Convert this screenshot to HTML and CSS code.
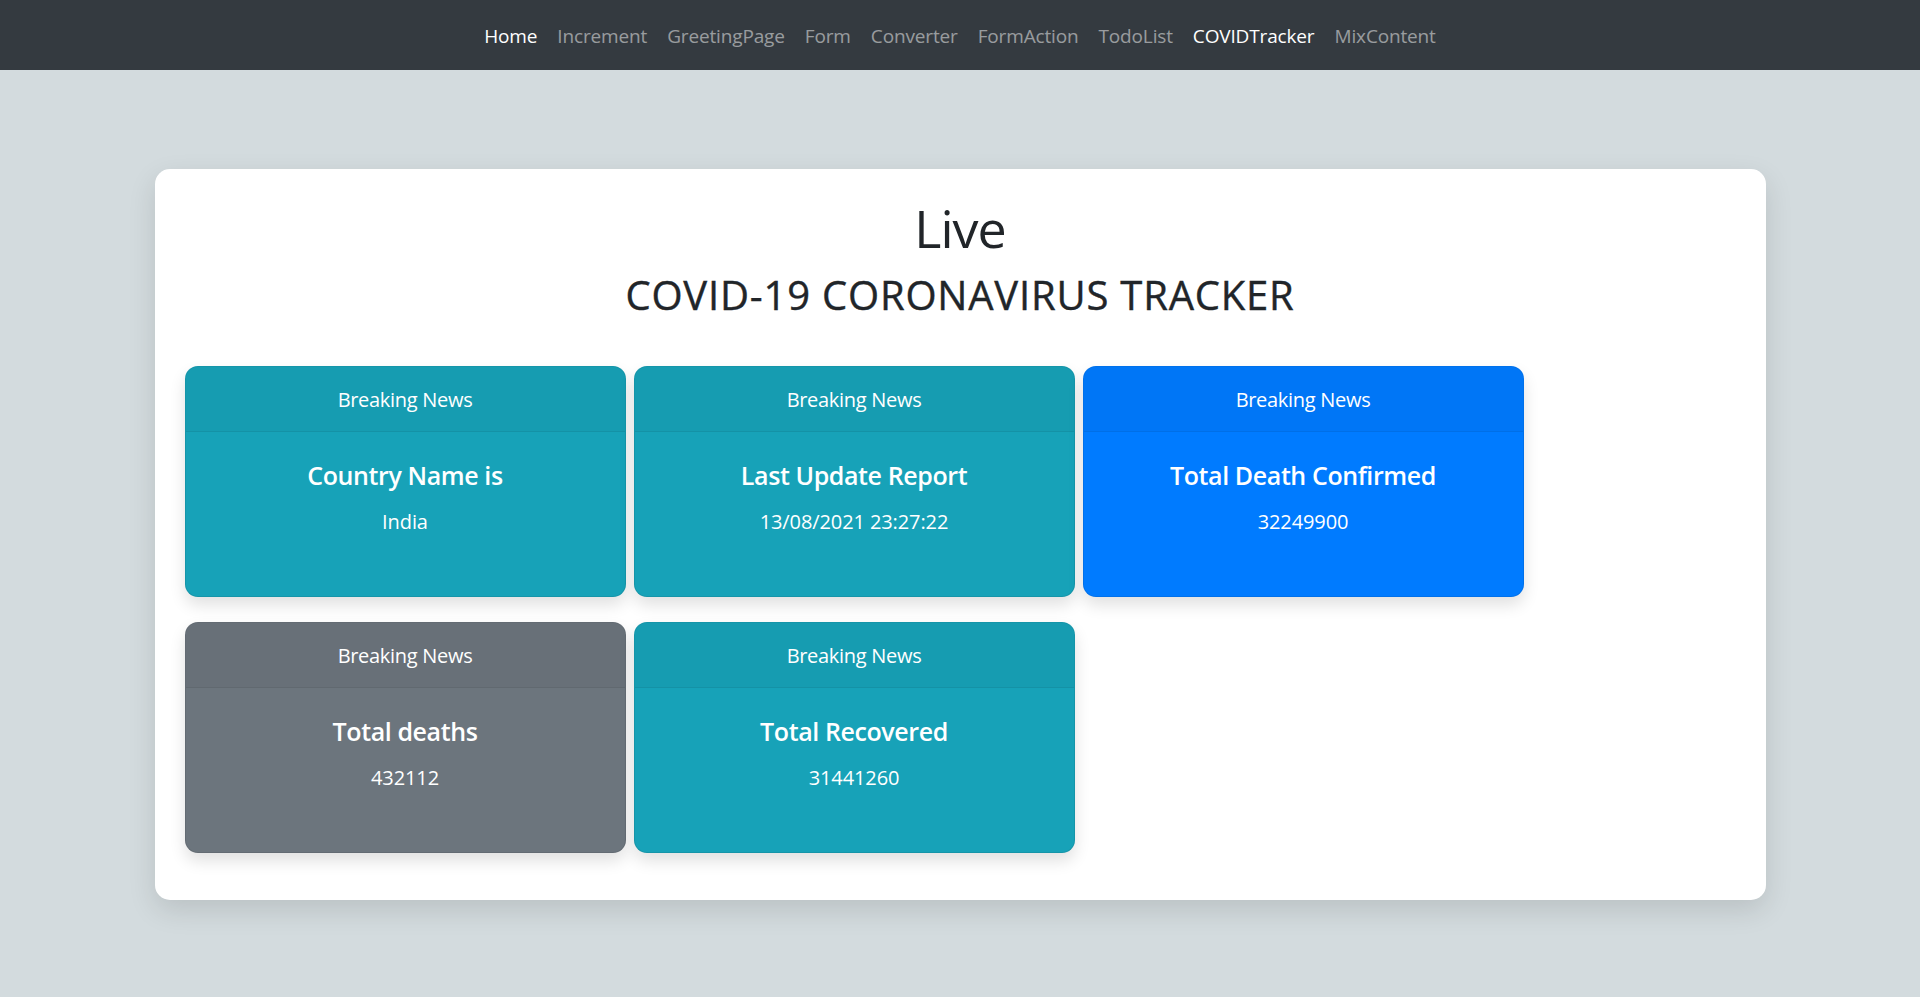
FILE: index.html
```html
<!DOCTYPE html>
<html lang="en">
<head>
<meta charset="utf-8">
<title>COVID Tracker</title>
<link rel="stylesheet" href="styles.css">
</head>
<body>
<nav class="navbar">
  <ul class="nav-list">
    <li><a class="nav-link active" href="#">Home</a></li>
    <li><a class="nav-link" href="#">Increment</a></li>
    <li><a class="nav-link" href="#">GreetingPage</a></li>
    <li><a class="nav-link" href="#">Form</a></li>
    <li><a class="nav-link" href="#">Converter</a></li>
    <li><a class="nav-link" href="#">FormAction</a></li>
    <li><a class="nav-link" href="#">TodoList</a></li>
    <li><a class="nav-link active" href="#">COVIDTracker</a></li>
    <li><a class="nav-link" href="#">MixContent</a></li>
  </ul>
</nav>
<main class="page">
  <section class="panel">
    <h1 class="title">Live</h1>
    <h2 class="subtitle">COVID-19 CORONAVIRUS TRACKER</h2>
    <div class="cards">
      <div class="card card-info">
        <div class="card-header">Breaking News</div>
        <div class="card-body">
          <h5 class="card-title">Country Name is</h5>
          <p class="card-text">India</p>
        </div>
      </div>
      <div class="card card-info">
        <div class="card-header">Breaking News</div>
        <div class="card-body">
          <h5 class="card-title">Last Update Report</h5>
          <p class="card-text">13/08/2021 23:27:22</p>
        </div>
      </div>
      <div class="card card-primary">
        <div class="card-header">Breaking News</div>
        <div class="card-body">
          <h5 class="card-title">Total Death Confirmed</h5>
          <p class="card-text">32249900</p>
        </div>
      </div>
      <div class="card card-secondary">
        <div class="card-header">Breaking News</div>
        <div class="card-body">
          <h5 class="card-title">Total deaths</h5>
          <p class="card-text">432112</p>
        </div>
      </div>
      <div class="card card-info">
        <div class="card-header">Breaking News</div>
        <div class="card-body">
          <h5 class="card-title">Total Recovered</h5>
          <p class="card-text">31441260</p>
        </div>
      </div>
    </div>
  </section>
</main>
</body>
</html>
```
FILE: styles.css
```css
* { box-sizing: border-box; }

html, body {
  margin: 0;
  padding: 0;
}

body {
  background: #d3dbde;
  font-family: "Open Sans", "Noto Sans", sans-serif;
  color: #212529;
  min-height: 997px;
}

.navbar {
  height: 70px;
  background: #343a40;
  display: flex;
  justify-content: center;
  align-items: center;
}

.nav-list {
  list-style: none;
  margin: 0;
  padding: 1px 0 0 0;
  display: flex;
}

.nav-link {
  display: block;
  padding: 0 10px;
  font-size: 19px;
  line-height: 30px;
  color: rgba(255, 255, 255, 0.5);
  text-decoration: none;
  letter-spacing: -0.15px;
}

.nav-link.active {
  color: #fff;
}

.page {
  padding-top: 99px;
}

.panel {
  width: 1611px;
  margin: 0 auto;
  background: #fff;
  border-radius: 15px;
  box-shadow: 0 10px 28px rgba(0, 0, 0, 0.12);
  padding: 28px 30px 47px;
}

.title {
  margin: 0;
  text-align: center;
  font-size: 52px;
  line-height: 62px;
  font-weight: 500;
  letter-spacing: -1px;
}

.subtitle {
  margin: 12px 0 0;
  text-align: center;
  font-size: 40px;
  line-height: 48px;
  font-weight: 500;
  letter-spacing: 0.8px;
  -webkit-text-stroke: 0.4px #212529;
}

.cards {
  margin-top: 47px;
  display: grid;
  grid-template-columns: repeat(3, 441px);
  column-gap: 8px;
  row-gap: 25px;
}

.card {
  border-radius: 13px;
  overflow: hidden;
  color: #fff;
  height: 231px;
  box-shadow: 0 8px 16px rgba(0, 0, 0, 0.12);
  border: 1px solid rgba(0, 0, 0, 0.08);
}

.card-header {
  height: 65px;
  display: flex;
  align-items: center;
  justify-content: center;
  font-size: 20px;
  letter-spacing: -0.3px;
  border-bottom: 1px solid rgba(0, 0, 0, 0.06);
  background: rgba(0, 0, 0, 0.035);
  padding-top: 1px;
}

.card-body {
  padding: 28px 20px 0;
  text-align: center;
}

.card-title {
  margin: 0;
  font-size: 25px;
  line-height: 30px;
  font-weight: 600;
  letter-spacing: -0.4px;
}

.card-text {
  margin: 17px 0 0;
  font-size: 20px;
  line-height: 30px;
  letter-spacing: -0.1px;
}

.card-info { background: #17a2b8; }
.card-primary { background: #007bff; }
.card-secondary { background: #6c757d; }
```
